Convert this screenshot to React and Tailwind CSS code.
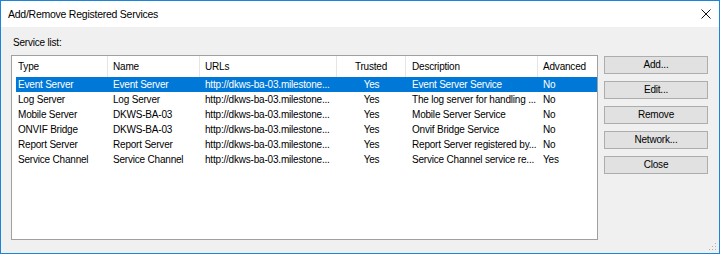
import React from "react";

const cols = [
  { w: "w-[96px]", pad: "pl-[6px]", align: "text-left" },
  { w: "w-[92px]", pad: "pl-[5px]", align: "text-left" },
  { w: "w-[137px]", pad: "pl-[5px]", align: "text-left" },
  { w: "w-[69px]", pad: "", align: "text-center" },
  { w: "w-[132px]", pad: "pl-[6px]", align: "text-left" },
  { w: "flex-1", pad: "pl-[5px]", align: "text-left" },
];

const headers = ["Type", "Name", "URLs", "Trusted", "Description", "Advanced"];

const rows = [
  ["Event Server", "Event Server", "http://dkws-ba-03.milestone...", "Yes", "Event Server Service", "No"],
  ["Log Server", "Log Server", "http://dkws-ba-03.milestone...", "Yes", "The log server for handling ...", "No"],
  ["Mobile Server", "DKWS-BA-03", "http://dkws-ba-03.milestone...", "Yes", "Mobile Server Service", "No"],
  ["ONVIF Bridge", "DKWS-BA-03", "http://dkws-ba-03.milestone...", "Yes", "Onvif Bridge Service", "No"],
  ["Report Server", "Report Server", "http://dkws-ba-03.milestone...", "Yes", "Report Server registered by...", "No"],
  ["Service Channel", "Service Channel", "http://dkws-ba-03.milestone...", "Yes", "Service Channel service re...", "Yes"],
];

const buttons = ["Add...", "Edit...", "Remove", "Network...", "Close"];

export default function App() {
  return (
    <div className="relative w-[720px] h-[254px] border border-[#1a85db] bg-[#f0f0f0] flex flex-col font-['Liberation_Sans',Arial,sans-serif] text-[10px] tracking-[-0.2px] text-black overflow-hidden">
      {/* Title bar */}
      <div className="h-[26px] bg-white flex items-center justify-between shrink-0">
        <span className="pl-[7px] text-[10.5px] tracking-[-0.25px] leading-none">Add/Remove Registered Services</span>
        <svg width="10" height="10" viewBox="0 0 10 10" className="mr-[8px] mt-[0px]">
          <path d="M0.5 0.5 L9.5 9.5 M9.5 0.5 L0.5 9.5" stroke="#111" strokeWidth="1" fill="none" />
        </svg>
      </div>

      {/* Body */}
      <div className="flex-1 flex flex-col px-[10px]">
        <div className="pt-[10px] h-[22px] leading-[12px] pl-[2px]">Service list:</div>
        <div className="mt-[6px] flex gap-[6px]">
          {/* List box */}
          <div className="w-[587px] h-[185px] border border-[#a0a0a0] bg-white flex flex-col">
            {/* header */}
            <div className="h-[21px] flex items-stretch shrink-0">
              {headers.map((h, i) => (
                <div
                  key={h}
                  className={`${cols[i].w} ${cols[i].pad} ${cols[i].align} flex items-center ${i === 3 ? "justify-center" : ""} ${i < 5 ? "border-r border-[#e5e5e5]" : ""} whitespace-nowrap overflow-hidden`}
                >
                  {h}
                </div>
              ))}
            </div>
            {/* rows */}
            {rows.map((r, ri) => (
              <div
                key={ri}
                className={`h-[15px] flex items-center ${ri === 0 ? "bg-[#0078d7] text-white" : ""} ml-[4px]`}
              >
                {r.map((c, ci) => (
                  <div
                    key={ci}
                    className={`${ci === 0 ? "w-[92px] pl-[2px]" : cols[ci].w + " " + cols[ci].pad} ${cols[ci].align} whitespace-nowrap overflow-hidden leading-[15px]`}
                  >
                    {c}
                  </div>
                ))}
              </div>
            ))}
          </div>

          {/* Buttons */}
          <div className="mt-[1px] flex flex-col gap-[7px]">
            {buttons.map((b) => (
              <button
                key={b}
                className="w-[104px] h-[18px] border border-[#adadad] bg-[#e1e1e1] text-center leading-[16px] text-black"
              >
                {b}
              </button>
            ))}
          </div>
        </div>
      </div>

      {/* resize grip */}
      <svg width="8" height="8" viewBox="0 0 8 8" className="absolute right-[2px] bottom-[2px]">
        <rect x="6" y="0" width="1" height="1" fill="#b0b0b0" />
        <rect x="3" y="3" width="1" height="1" fill="#b0b0b0" />
        <rect x="6" y="3" width="1" height="1" fill="#b0b0b0" />
        <rect x="0" y="6" width="1" height="1" fill="#b0b0b0" />
        <rect x="3" y="6" width="1" height="1" fill="#b0b0b0" />
        <rect x="6" y="6" width="1" height="1" fill="#b0b0b0" />
      </svg>
    </div>
  );
}
